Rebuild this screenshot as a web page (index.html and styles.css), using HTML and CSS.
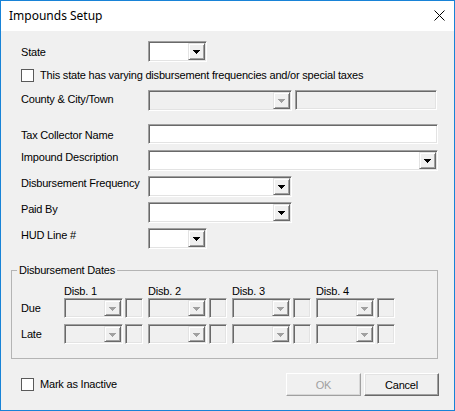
FILE: index.html
```html
<!DOCTYPE html>
<html>
<head>
<meta charset="utf-8">
<link rel="stylesheet" href="styles.css">
</head>
<body>
<div class="window">
  <div class="titlebar">
    <span class="title">Impounds Setup</span>
    <svg class="close" width="11" height="11" viewBox="0 0 11 11"><path d="M0.5 0.5L10.5 10.5M10.5 0.5L0.5 10.5" stroke="#000" stroke-width="1"/></svg>
  </div>
  <div class="body">
    <div class="row r1">
      <span class="lab p5">State</span>
      <div class="sunken combo w-small h21"><div class="dd"><svg width="7" height="4" viewBox="0 0 7 4"><path d="M0 0h7v1h-1v1h-1v1h-1v1h-1v-1h-1v-1h-1v-1h-1z" fill="#000"/></svg></div></div>
    </div>
    <div class="row r2 center">
      <span class="check"></span><span class="check-text">This state has varying disbursement frequencies and/or special taxes</span>
    </div>
    <div class="row r3">
      <span class="lab p3">County &amp; City/Town</span>
      <div class="sunken combo disabled w-mid h21"><div class="dd"><svg width="7" height="4" viewBox="0 0 7 4"><path d="M0 0h7v1h-1v1h-1v1h-1v1h-1v-1h-1v-1h-1v-1h-1z" fill="#a0a0a0"/></svg></div></div>
      <div class="sunken text disabled w-town h21"></div>
    </div>
    <div class="row r4">
      <span class="lab p5">Tax Collector Name</span>
      <div class="sunken text w-wide h20"></div>
    </div>
    <div class="row r5">
      <span class="lab p1">Impound Description</span>
      <div class="sunken combo w-wide h21"><div class="dd"><svg width="7" height="4" viewBox="0 0 7 4"><path d="M0 0h7v1h-1v1h-1v1h-1v1h-1v-1h-1v-1h-1v-1h-1z" fill="#000"/></svg></div></div>
    </div>
    <div class="row r6">
      <span class="lab p1">Disbursement Frequency</span>
      <div class="sunken combo w-mid h21"><div class="dd"><svg width="7" height="4" viewBox="0 0 7 4"><path d="M0 0h7v1h-1v1h-1v1h-1v1h-1v-1h-1v-1h-1v-1h-1z" fill="#000"/></svg></div></div>
    </div>
    <div class="row r7">
      <span class="lab p1">Paid By</span>
      <div class="sunken combo w-mid h21"><div class="dd"><svg width="7" height="4" viewBox="0 0 7 4"><path d="M0 0h7v1h-1v1h-1v1h-1v1h-1v-1h-1v-1h-1v-1h-1z" fill="#000"/></svg></div></div>
    </div>
    <div class="row r8">
      <span class="lab p1">HUD Line #</span>
      <div class="sunken combo w-small h21"><div class="dd"><svg width="7" height="4" viewBox="0 0 7 4"><path d="M0 0h7v1h-1v1h-1v1h-1v1h-1v-1h-1v-1h-1v-1h-1z" fill="#000"/></svg></div></div>
    </div>

    <fieldset class="group">
      <legend>Disbursement Dates</legend>
      <div class="grid head">
        <span></span><span>Disb. 1</span><span>Disb. 2</span><span>Disb. 3</span><span>Disb. 4</span>
      </div>
      <div class="grid drow">
        <span class="rlab">Due</span>
        <div class="cell"><div class="sunken combo disabled dcombo"><div class="dd"><svg width="7" height="4" viewBox="0 0 7 4"><path d="M0 0h7v1h-1v1h-1v1h-1v1h-1v-1h-1v-1h-1v-1h-1z" fill="#a0a0a0"/></svg></div></div><div class="sunken text disabled dbox"></div></div>
        <div class="cell"><div class="sunken combo disabled dcombo"><div class="dd"><svg width="7" height="4" viewBox="0 0 7 4"><path d="M0 0h7v1h-1v1h-1v1h-1v1h-1v-1h-1v-1h-1v-1h-1z" fill="#a0a0a0"/></svg></div></div><div class="sunken text disabled dbox"></div></div>
        <div class="cell"><div class="sunken combo disabled dcombo"><div class="dd"><svg width="7" height="4" viewBox="0 0 7 4"><path d="M0 0h7v1h-1v1h-1v1h-1v1h-1v-1h-1v-1h-1v-1h-1z" fill="#a0a0a0"/></svg></div></div><div class="sunken text disabled dbox"></div></div>
        <div class="cell"><div class="sunken combo disabled dcombo"><div class="dd"><svg width="7" height="4" viewBox="0 0 7 4"><path d="M0 0h7v1h-1v1h-1v1h-1v1h-1v-1h-1v-1h-1v-1h-1z" fill="#a0a0a0"/></svg></div></div><div class="sunken text disabled dbox"></div></div>
      </div>
      <div class="grid drow late">
        <span class="rlab">Late</span>
        <div class="cell"><div class="sunken combo disabled dcombo"><div class="dd"><svg width="7" height="4" viewBox="0 0 7 4"><path d="M0 0h7v1h-1v1h-1v1h-1v1h-1v-1h-1v-1h-1v-1h-1z" fill="#a0a0a0"/></svg></div></div><div class="sunken text disabled dbox"></div></div>
        <div class="cell"><div class="sunken combo disabled dcombo"><div class="dd"><svg width="7" height="4" viewBox="0 0 7 4"><path d="M0 0h7v1h-1v1h-1v1h-1v1h-1v-1h-1v-1h-1v-1h-1z" fill="#a0a0a0"/></svg></div></div><div class="sunken text disabled dbox"></div></div>
        <div class="cell"><div class="sunken combo disabled dcombo"><div class="dd"><svg width="7" height="4" viewBox="0 0 7 4"><path d="M0 0h7v1h-1v1h-1v1h-1v1h-1v-1h-1v-1h-1v-1h-1z" fill="#a0a0a0"/></svg></div></div><div class="sunken text disabled dbox"></div></div>
        <div class="cell"><div class="sunken combo disabled dcombo"><div class="dd"><svg width="7" height="4" viewBox="0 0 7 4"><path d="M0 0h7v1h-1v1h-1v1h-1v1h-1v-1h-1v-1h-1v-1h-1z" fill="#a0a0a0"/></svg></div></div><div class="sunken text disabled dbox"></div></div>
      </div>
    </fieldset>

    <div class="footer">
      <span class="check"></span><span class="check-text">Mark as Inactive</span>
      <button class="btn ok" disabled>OK</button>
      <button class="btn cancel">Cancel</button>
    </div>
  </div>
</div>
</body>
</html>
```

FILE: styles.css
```css
html, body {
  margin: 0;
  padding: 0;
}
body {
  font-family: "Liberation Sans", Arial, sans-serif;
  font-size: 11px;
  letter-spacing: -0.2px;
  color: #000;
  background: #f0f0f0;
}
.window {
  width: 455px;
  height: 411px;
  box-sizing: border-box;
  border: 1px solid #1883d7;
  display: flex;
  flex-direction: column;
  background: #f0f0f0;
}
.titlebar {
  flex: none;
  height: 30px;
  background: #fff;
  display: flex;
  align-items: center;
  justify-content: space-between;
  padding: 0 9px 0 8px;
}
.title {
  font-family: "Noto Sans", "Open Sans", sans-serif;
  font-size: 12px;
  letter-spacing: 0;
  color: #000;
  padding-bottom: 1px;
}
.close {
  display: block;
  margin-bottom: 1px;
}
.body {
  flex: 1;
  display: flex;
  flex-direction: column;
  padding: 10px 0 0 20px;
}
.row {
  display: flex;
  align-items: flex-start;
}
.row.center {
  align-items: center;
}
.r1 { height: 21px; }
.r2 { height: 19px; margin-top: 4px; }
.r3 { height: 21px; margin-top: 5px; }
.r4 { height: 20px; margin-top: 13px; }
.r5 { height: 21px; margin-top: 6px; }
.r6 { height: 21px; margin-top: 5px; }
.r7 { height: 21px; margin-top: 5px; }
.r8 { height: 21px; margin-top: 5px; }

.lab {
  flex: none;
  width: 127px;
  line-height: 13px;
  white-space: nowrap;
}
.p1 { padding-top: 1px; }
.p3 { padding-top: 3px; }
.p5 { padding-top: 5px; }

.sunken {
  box-sizing: border-box;
  border: 1px solid;
  border-color: #a0a0a0 #ffffff #ffffff #a0a0a0;
  box-shadow: inset 1px 1px 0 #696969, inset -1px -1px 0 #e3e3e3;
  background: #fff;
  flex: none;
}
.sunken.disabled {
  background: #f0f0f0;
}
.combo {
  display: flex;
  justify-content: flex-end;
  padding: 1px;
}
.h21 { height: 21px; }
.h20 { height: 20px; }
.w-small { width: 59px; }
.w-mid { width: 144px; }
.w-wide { width: 290px; }
.w-town { width: 142px; margin-left: 3px; height: 20px; }

.dd {
  box-sizing: border-box;
  width: 17px;
  height: 100%;
  background: #f0f0f0;
  border: 1px solid;
  border-color: #e3e3e3 #696969 #696969 #e3e3e3;
  box-shadow: inset 1px 1px 0 #ffffff, inset -1px -1px 0 #a0a0a0;
  display: flex;
  align-items: center;
  justify-content: center;
}
.dd svg {
  display: block;
  margin-top: 1px;
}

.check {
  flex: none;
  box-sizing: border-box;
  width: 13px;
  height: 13px;
  border: 1px solid #5a5a5a;
  background: #fff;
}
.check-text {
  margin-left: 6px;
  line-height: 13px;
  white-space: nowrap;
}

.group {
  margin: 14px 0 0 -10px;
  width: 427px;
  box-sizing: border-box;
  border: 1px solid #b4b4b4;
  padding: 8px 0 14px 9px;
  min-width: 0;
}
.group legend {
  margin-left: -4px;
  padding: 0 2px;
  line-height: 14px;
}
.grid {
  display: grid;
  grid-template-columns: 38px repeat(4, 79px);
  column-gap: 5px;
  align-items: center;
}
.head {
  height: 13px;
  line-height: 13px;
}
.drow {
  height: 20px;
}
.drow.late {
  margin-top: 6px;
}
.rlab {
  line-height: 13px;
}
.cell {
  display: flex;
  gap: 2px;
}
.dcombo {
  width: 59px;
  height: 20px;
}
.dbox {
  width: 18px;
  height: 20px;
}

.footer {
  margin-top: 14px;
  display: flex;
  align-items: center;
  padding-right: 15px;
}
.footer .check-text {
  margin-right: auto;
}
.btn {
  box-sizing: border-box;
  width: 75px;
  height: 23px;
  font-family: "Liberation Sans", Arial, sans-serif;
  font-size: 11px;
  letter-spacing: -0.2px;
  background: #f0f0f0;
  border: 1px solid;
  padding: 0;
}
.ok {
  color: #a0a0a0;
  border-color: #ffffff #a0a0a0 #a0a0a0 #ffffff;
  box-shadow: inset -1px -1px 0 #d8d8d8;
}
.cancel {
  margin-left: 3px;
  color: #000;
  border-color: #ffffff #696969 #696969 #ffffff;
  box-shadow: inset -1px -1px 0 #a0a0a0, inset 1px 1px 0 #e3e3e3;
}
```
